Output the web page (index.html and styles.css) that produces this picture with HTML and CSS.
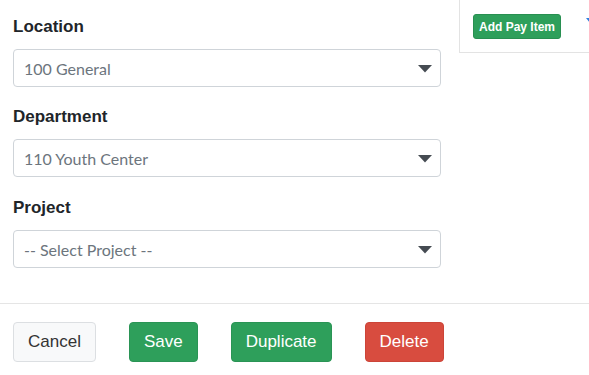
FILE: index.html
```html
<!DOCTYPE html>
<html>
<head>
<meta charset="utf-8">
<link rel="stylesheet" href="styles.css">
</head>
<body>
<div class="top">
  <div class="form">
    <div class="group">
      <div class="label">Location</div>
      <div class="select"><span>100 General</span><svg class="caret" width="14" height="8" viewBox="0 0 14 8"><path d="M0 0H14L7 7.5Z" fill="#454b52"/></svg></div>
    </div>
    <div class="group second">
      <div class="label">Department</div>
      <div class="select"><span>110 Youth Center</span><svg class="caret" width="14" height="8" viewBox="0 0 14 8"><path d="M0 0H14L7 7.5Z" fill="#454b52"/></svg></div>
    </div>
    <div class="group last">
      <div class="label">Project</div>
      <div class="select"><span>-- Select Project --</span><svg class="caret" width="14" height="8" viewBox="0 0 14 8"><path d="M0 0H14L7 7.5Z" fill="#454b52"/></svg></div>
    </div>
  </div>
  <div class="panel">
    <button class="btn-small">Add Pay Item</button>
    <svg class="blue" width="8" height="6" viewBox="0 0 8 6"><path d="M0 0H8L4 5Z" fill="#2f7fe0"/></svg>
  </div>
</div>
<div class="divider"></div>
<div class="actions">
  <button class="btn btn-default">Cancel</button>
  <button class="btn btn-green">Save</button>
  <button class="btn btn-green">Duplicate</button>
  <button class="btn btn-red">Delete</button>
</div>
</body>
</html>
```

FILE: styles.css
```css
html, body {
  margin: 0;
  padding: 0;
  background: #fff;
  overflow: hidden;
}
body {
  width: 589px;
  height: 375px;
  font-family: "Liberation Sans", Arial, sans-serif;
  color: #212529;
}
.top {
  display: flex;
  align-items: flex-start;
}
.form {
  width: 428px;
  padding: 15px 0 0 13px;
  flex: none;
}
.group {
  margin-bottom: 18px;
}
.group.second {
  margin-bottom: 19px;
}
.group.last {
  margin-bottom: 0;
}
.label {
  font-weight: bold;
  font-size: 17px;
  line-height: 24px;
  margin-bottom: 10px;
}
.select {
  box-sizing: border-box;
  height: 38px;
  border: 1px solid #cfd4d9;
  border-radius: 4px;
  display: flex;
  align-items: center;
  justify-content: space-between;
  padding: 0 8px 0 10px;
  font-family: Lato, "Noto Sans", sans-serif;
  font-size: 16px;
  color: #6c757d;
}
.caret {
  display: block;
  margin-top: 1px;
}
.panel {
  margin-left: 18px;
  flex: 1;
  border-left: 1px solid #e3e3e3;
  border-bottom: 1px solid #e3e3e3;
  display: flex;
  align-items: flex-start;
  padding: 14px 0 0 13px;
  box-sizing: border-box;
  height: 53px;
  overflow: hidden;
}
.btn-small {
  font-family: "Liberation Sans", Arial, sans-serif;
  font-weight: bold;
  font-size: 12px;
  color: #fff;
  background: #2e9f5b;
  border: 1px solid #288f51;
  border-radius: 3px;
  height: 25px;
  padding: 0 5px;
  flex: none;
}
.blue {
  flex: none;
  margin: 4px 0 0 25px;
}
.divider {
  margin-top: 35px;
  height: 1px;
  background: #e5e5e5;
}
.actions {
  display: flex;
  gap: 33px;
  padding: 18px 0 0 13px;
}
.btn {
  font-family: "Liberation Sans", Arial, sans-serif;
  font-size: 17px;
  height: 40px;
  padding: 0 14px;
  border-radius: 4px;
  border: 1px solid transparent;
  line-height: 24px;
}
.btn-default {
  background: #f8f9fa;
  border-color: #dcdfe2;
  color: #333;
}
.btn-green {
  background: #2e9f5b;
  border-color: #2a9455;
  color: #fff;
}
.btn-red {
  background: #d84c3f;
  border-color: #cc4438;
  color: #fff;
}
```
